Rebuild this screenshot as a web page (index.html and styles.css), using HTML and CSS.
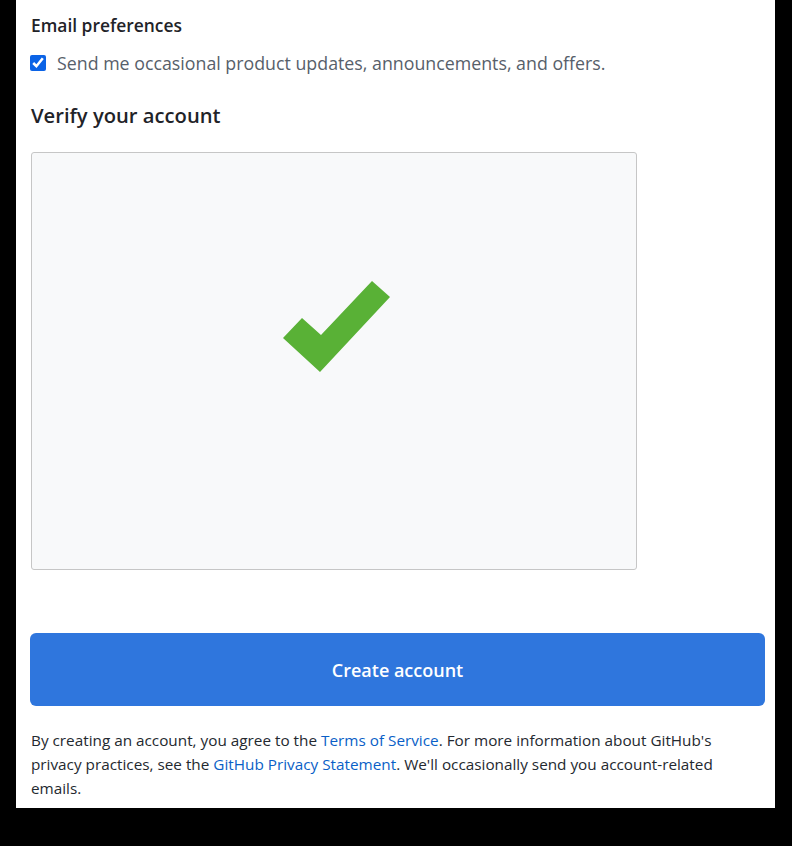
FILE: index.html
```html
<!DOCTYPE html>
<html lang="en">
<head>
<meta charset="utf-8">
<title>Create account</title>
<link rel="stylesheet" href="styles.css">
</head>
<body>
<main class="panel">
  <h3 class="pref-title">Email preferences</h3>
  <label class="pref-option">
    <input type="checkbox" class="pref-check" checked>
    <span>Send me occasional product updates, announcements, and offers.</span>
  </label>
  <h2 class="verify-title">Verify your account</h2>
  <div class="captcha">
    <svg class="captcha-ok" width="108" height="94" viewBox="282 280 108 94" aria-hidden="true">
      <polygon points="283,338 302,318 321,335 372,281 390,297 320,372" fill="#59b136"/>
    </svg>
  </div>
  <button class="create-btn" type="button">Create account</button>
  <p class="legal">By creating an account, you agree to the <a href="#">Terms of Service</a>. For more information about GitHub's privacy practices, see the <a href="#">GitHub Privacy Statement</a>. We'll occasionally send you account-related emails.</p>
</main>
</body>
</html>
```
FILE: styles.css
```css
html, body {
  margin: 0;
  padding: 0;
  background: #000;
}
body {
  height: 846px;
  font-family: "Open Sans", "Noto Sans", sans-serif;
}
.panel {
  margin-left: 16px;
  width: 759px;
  box-sizing: border-box;
  background: #fff;
  padding: 12px 10px 8px 14px;
  display: flex;
  flex-direction: column;
  align-items: flex-start;
}
.pref-title {
  margin: 0 0 0 1px;
  font-size: 17.4px;
  font-weight: 600;
  color: #1f2328;
  line-height: 26px;
}
.pref-option {
  display: flex;
  align-items: center;
  gap: 11px;
  margin-top: 12px;
  font-size: 17.8px;
  color: #57606a;
  line-height: 26px;
}
.pref-check {
  margin: 0;
  width: 16px;
  height: 16px;
  accent-color: #0b63e6;
}
.verify-title {
  margin: 24px 0 0 1px;
  font-size: 20.2px;
  font-weight: 600;
  color: #1f2328;
  line-height: 30px;
}
.captcha {
  margin-top: 22px;
  margin-left: 1px;
  width: 606px;
  height: 418px;
  box-sizing: border-box;
  background: #f8f9fa;
  border: 1px solid #c6c6c6;
  border-radius: 3px;
  position: relative;
}
.captcha-ok {
  position: absolute;
  left: 250px;
  top: 127px;
}
.create-btn {
  margin-top: 63px;
  align-self: stretch;
  height: 73px;
  border: 0;
  border-radius: 6px;
  background: #2f76dd;
  color: #fff;
  font-family: inherit;
  font-size: 18px;
  font-weight: 600;
  cursor: pointer;
}
.legal {
  margin: 22px 0 0 1px;
  max-width: 700px;
  font-size: 15.3px;
  line-height: 24px;
  color: #24292f;
}
.legal a {
  color: #0a5fc7;
  text-decoration: none;
}
```
